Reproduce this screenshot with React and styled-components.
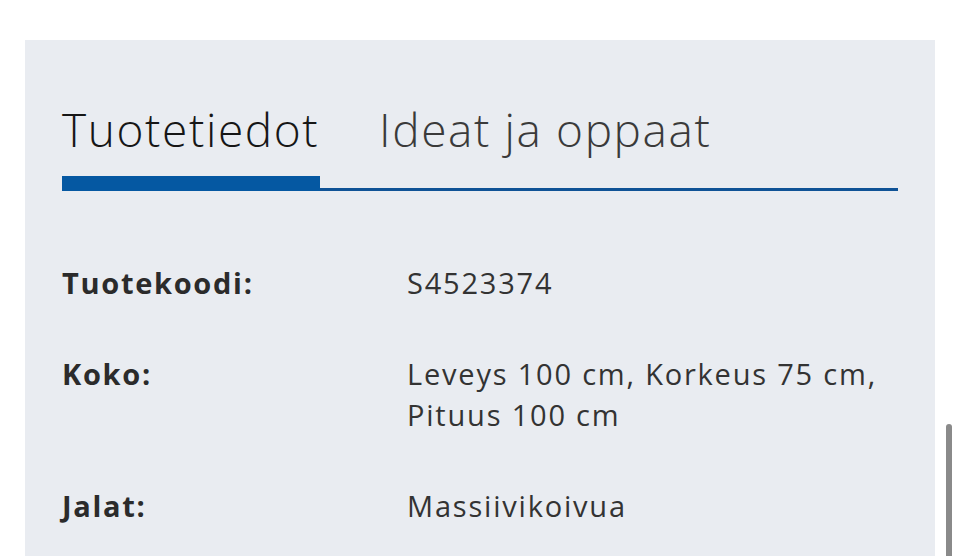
import React, { useState } from 'react'
import styled, { createGlobalStyle } from 'styled-components'

const GlobalStyle = createGlobalStyle`
  html, body {
    margin: 0;
    padding: 0;
    background: #ffffff;
    overflow: hidden;
  }
  body {
    font-family: "Open Sans", "Liberation Sans", sans-serif;
    color: #2d2d2d;
  }
`

const rows = [
  { label: 'Tuotekoodi:', value: ['S4523374'] },
  { label: 'Koko:', value: ['Leveys 100 cm, Korkeus 75 cm,', 'Pituus 100 cm'] },
  { label: 'Jalat:', value: ['Massiivikoivua'] },
]

function App() {
  const [tab, setTab] = useState(0)
  return (
    <Page>
      <GlobalStyle />
      <Panel>
        <TabBar>
          <Tab active={tab === 0} onClick={() => setTab(0)}>Tuotetiedot</Tab>
          <Tab active={tab === 1} onClick={() => setTab(1)}>Ideat ja oppaat</Tab>
        </TabBar>
        <Specs>
          {rows.map(r => (
            <Row key={r.label}>
              <Label>{r.label}</Label>
              <Value>
                {r.value.map(line => <span key={line}>{line}</span>)}
              </Value>
            </Row>
          ))}
        </Specs>
      </Panel>
      <ScrollThumb />
    </Page>
  )
}

export default App

const Page = styled.div`
  position: relative;
  height: 556px;
  padding-top: 40px;
  box-sizing: border-box;
  overflow: hidden;
`

const Panel = styled.div`
  margin: 0 25px;
  padding: 0 37px;
  height: 100%;
  background-color: #e9ecf1;
`

const TabBar = styled.div`
  display: flex;
  align-items: flex-end;
  padding-top: 61px;
  box-shadow: inset 0 -3px 0 #0f5296;
`

const Tab = styled.div`
  font-size: 46px;
  font-weight: 300;
  line-height: 56px;
  letter-spacing: 1.6px;
  color: ${props => props.active ? '#161616' : '#3a3a3a'};
  padding-bottom: 19px;
  margin-right: 59px;
  width: ${props => props.active ? '258px' : 'auto'};
  white-space: nowrap;
  border-bottom: 15px solid ${props => props.active ? '#0558a2' : 'transparent'};
  cursor: pointer;
`

const Specs = styled.div`
  display: flex;
  flex-direction: column;
  gap: 50px;
  padding-top: 71px;
`

const Row = styled.div`
  display: grid;
  grid-template-columns: 345px 1fr;
  font-size: 29px;
  line-height: 41px;
`

const Label = styled.div`
  font-weight: 700;
  letter-spacing: 1.7px;
  color: #2b2b2b;
`

const Value = styled.div`
  display: flex;
  flex-direction: column;
  font-weight: 400;
  letter-spacing: 1.8px;
  color: #333333;
`

const ScrollThumb = styled.div`
  position: absolute;
  right: 8px;
  top: 424px;
  width: 6px;
  height: 160px;
  border-radius: 3px;
  background-color: #8a8a8a;
`
